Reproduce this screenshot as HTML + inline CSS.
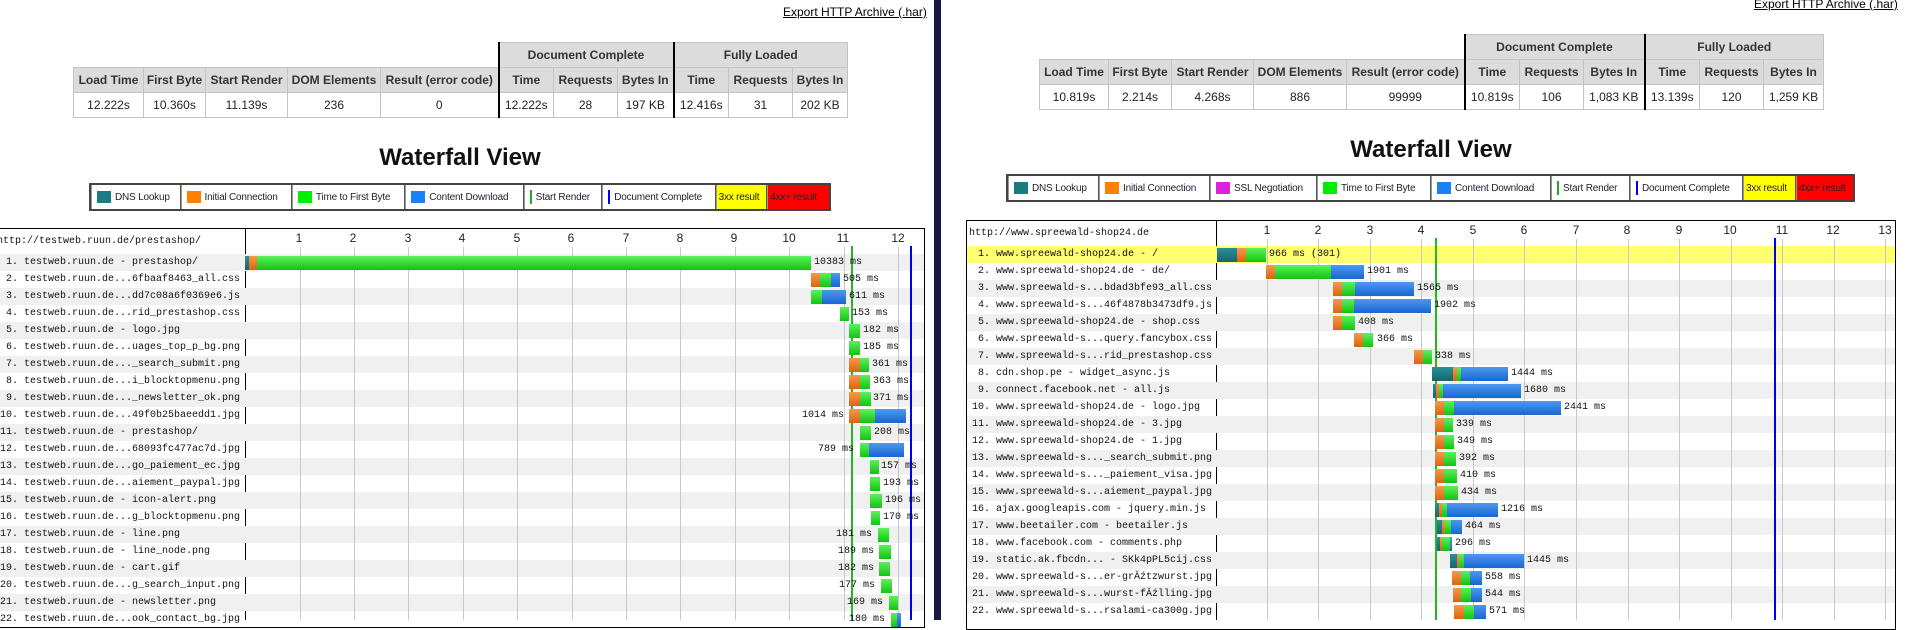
<!DOCTYPE html>
<html><head><meta charset="utf-8"><style>
*{margin:0;padding:0;box-sizing:border-box}
body{width:1920px;height:620px;overflow:hidden;background:#fff;position:relative;font-family:"Liberation Sans",Arial,sans-serif;color:#222}
.a{position:absolute}
.exp{font-size:12px;color:#000;text-decoration:underline;white-space:nowrap}
table.res{position:absolute;border-collapse:collapse;font-size:12px;table-layout:fixed}
table.res td{border:1px solid #c4c4c4;text-align:center;height:25px;padding:0;white-space:nowrap;overflow:hidden}
table.res td.h{background:#dcdcdc;font-weight:bold;color:#333}
table.res td.e{border:none;background:none}
table.res td.k{border-left:2px solid #000}
.title{position:absolute;font-size:24px;font-weight:bold;color:#111;text-align:center;white-space:nowrap}
.leg{position:absolute;border:2px solid #444;height:28px;display:flex;background:#fff}
.leg div{border-right:1px solid #555;border-left:1px solid #999;font-size:10px;letter-spacing:-0.2px;color:#223;display:flex;align-items:center;padding-left:5px;white-space:nowrap;overflow:hidden}
.leg div:last-child{border-right:none}
.sw{display:inline-block;width:14px;height:12px;margin-right:4px;flex:none}
.box{position:absolute;border:1px solid #000}
.bg{position:absolute;height:17px}
.gy{background:#f0f0f0}
.yl{background:#ffff70}
.gl{position:absolute;width:1px;background:#c8c8c8}
.tk{position:absolute;font:12px "Liberation Sans",Arial,sans-serif;width:20px;margin-left:-10px;text-align:center}
.row{position:absolute;height:17px;font:10px/17px "Liberation Mono",monospace;white-space:pre;color:#111}
.s{position:absolute;top:2px;height:14px}
.d{background:linear-gradient(#2a8f97,#16656c)}
.c{background:linear-gradient(#f59a4a,#d9650f)}
.f{background:linear-gradient(#5cf05c,#12c412)}
.b{background:linear-gradient(#4b9af0,#1a64d0)}
.t{position:absolute;top:0}
</style></head><body>

<!-- ===== LEFT PANEL ===== -->
<div class="a exp" style="left:783px;top:5px">Export HTTP Archive (.har)</div>
<table class="res" style="left:73px;top:42px;width:774px">
<colgroup><col style="width:70px"><col style="width:62px"><col style="width:82px"><col style="width:93px"><col style="width:118px"><col style="width:55px"><col style="width:64px"><col style="width:56px"><col style="width:55px"><col style="width:64px"><col style="width:55px"></colgroup>
<tr><td class="e"></td><td class="e"></td><td class="e"></td><td class="e"></td><td class="e"></td><td class="h k" colspan="3">Document Complete</td><td class="h k" colspan="3">Fully Loaded</td></tr>
<tr><td class="h">Load Time</td><td class="h">First Byte</td><td class="h">Start Render</td><td class="h">DOM Elements</td><td class="h">Result (error code)</td><td class="h k">Time</td><td class="h">Requests</td><td class="h">Bytes In</td><td class="h k">Time</td><td class="h">Requests</td><td class="h">Bytes In</td></tr>
<tr><td>12.222s</td><td>10.360s</td><td>11.139s</td><td>236</td><td>0</td><td class="k">12.222s</td><td>28</td><td>197 KB</td><td class="k">12.416s</td><td>31</td><td>202 KB</td></tr>
</table>
<div class="title" style="left:360px;width:200px;top:144px">Waterfall View</div>
<div class="leg" style="left:89px;top:183px;width:742px">
<div style="width:90px"><span class="sw" style="background:#1b7b83"></span>DNS Lookup</div>
<div style="width:112px"><span class="sw" style="background:#ff7f00"></span>Initial Connection</div>
<div style="width:114px"><span class="sw" style="background:#00ee00"></span>Time to First Byte</div>
<div style="width:119px"><span class="sw" style="background:#1a82f5"></span>Content Download</div>
<div style="width:79px"><span style="display:inline-block;width:2px;height:14px;background:#28a828;margin-right:4px"></span>Start Render</div>
<div style="width:114px"><span style="display:inline-block;width:2px;height:14px;background:#0000ee;margin-right:4px"></span>Document Complete</div>
<div style="width:52px;background:#ffff00;padding-left:2px">3xx result</div>
<div style="width:62px;background:#ff0000;padding-left:2px">4xx+ result</div>
</div>

<div class="box" style="left:-2px;top:228px;width:927px;height:400px"></div>
<div class="a" style="left:245px;top:228px;width:1px;height:392px;background:#000"></div>
<div class="row" style="left:-3px;top:233px">http://testweb.ruun.de/prestashop/</div>
<div class="bg gy" style="left:0;width:924px;top:254px"></div>
<div class="bg gy" style="left:0;width:924px;top:288px"></div>
<div class="bg gy" style="left:0;width:924px;top:322px"></div>
<div class="bg gy" style="left:0;width:924px;top:356px"></div>
<div class="bg gy" style="left:0;width:924px;top:390px"></div>
<div class="bg gy" style="left:0;width:924px;top:424px"></div>
<div class="bg gy" style="left:0;width:924px;top:458px"></div>
<div class="bg gy" style="left:0;width:924px;top:492px"></div>
<div class="bg gy" style="left:0;width:924px;top:526px"></div>
<div class="bg gy" style="left:0;width:924px;top:560px"></div>
<div class="bg gy" style="left:0;width:924px;top:594px"></div>

<div class="gl" style="left:300px;top:247px;height:373px"></div>
<div class="gl" style="left:354px;top:247px;height:373px"></div>
<div class="gl" style="left:408px;top:247px;height:373px"></div>
<div class="gl" style="left:463px;top:247px;height:373px"></div>
<div class="gl" style="left:517px;top:247px;height:373px"></div>
<div class="gl" style="left:572px;top:247px;height:373px"></div>
<div class="gl" style="left:626px;top:247px;height:373px"></div>
<div class="gl" style="left:680px;top:247px;height:373px"></div>
<div class="gl" style="left:735px;top:247px;height:373px"></div>
<div class="gl" style="left:789px;top:247px;height:373px"></div>
<div class="gl" style="left:844px;top:247px;height:373px"></div>
<div class="gl" style="left:898px;top:247px;height:373px"></div>
<div class="tk" style="left:299px;top:231px">1</div>
<div class="tk" style="left:353px;top:231px">2</div>
<div class="tk" style="left:408px;top:231px">3</div>
<div class="tk" style="left:462px;top:231px">4</div>
<div class="tk" style="left:517px;top:231px">5</div>
<div class="tk" style="left:571px;top:231px">6</div>
<div class="tk" style="left:626px;top:231px">7</div>
<div class="tk" style="left:680px;top:231px">8</div>
<div class="tk" style="left:734px;top:231px">9</div>
<div class="tk" style="left:789px;top:231px">10</div>
<div class="tk" style="left:843px;top:231px">11</div>
<div class="tk" style="left:898px;top:231px">12</div>
<div class="a" style="left:851px;top:246px;width:2px;height:374px;background:#28b428"></div>
<div class="a" style="left:910px;top:246px;width:2px;height:374px;background:#0000ee"></div>

<div class="row" style="left:0;top:254px;width:924px"> 1. testweb.ruun.de - prestashop/<i class="s d" style="left:245px;width:4px"></i><i class="s c" style="left:249px;width:8px"></i><i class="s f" style="left:257px;width:554px"></i><span class="t" style="left:814px">10383 ms</span></div>
<div class="row" style="left:0;top:271px"> 2. testweb.ruun.de...6fbaaf8463_all.css<i class="s c" style="left:811px;width:9px"></i><i class="s f" style="left:820px;width:11px"></i><i class="s b" style="left:831px;width:9px"></i><span class="t" style="left:843px">505 ms</span></div>
<div class="row" style="left:0;top:288px"> 3. testweb.ruun.de...dd7c08a6f0369e6.js<i class="s f" style="left:811px;width:11px"></i><i class="s b" style="left:822px;width:24px"></i><span class="t" style="left:849px">611 ms</span></div>
<div class="row" style="left:0;top:305px"> 4. testweb.ruun.de...rid_prestashop.css<i class="s f" style="left:840px;width:9px"></i><span class="t" style="left:852px">153 ms</span></div>
<div class="row" style="left:0;top:322px"> 5. testweb.ruun.de - logo.jpg<i class="s f" style="left:849px;width:11px"></i><span class="t" style="left:863px">182 ms</span></div>
<div class="row" style="left:0;top:339px"> 6. testweb.ruun.de...uages_top_p_bg.png<i class="s f" style="left:849px;width:11px"></i><span class="t" style="left:863px">185 ms</span></div>
<div class="row" style="left:0;top:356px"> 7. testweb.ruun.de..._search_submit.png<i class="s c" style="left:849px;width:11px"></i><i class="s f" style="left:860px;width:9px"></i><span class="t" style="left:872px">361 ms</span></div>
<div class="row" style="left:0;top:373px"> 8. testweb.ruun.de...i_blocktopmenu.png<i class="s c" style="left:849px;width:11px"></i><i class="s f" style="left:860px;width:10px"></i><span class="t" style="left:873px">363 ms</span></div>
<div class="row" style="left:0;top:390px"> 9. testweb.ruun.de..._newsletter_ok.png<i class="s c" style="left:849px;width:11px"></i><i class="s f" style="left:860px;width:11px"></i><span class="t" style="left:873px">371 ms</span></div>
<div class="row" style="left:0;top:407px">10. testweb.ruun.de...49f0b25baeedd1.jpg<span class="t" style="left:802px">1014 ms</span><i class="s c" style="left:849px;width:11px"></i><i class="s f" style="left:860px;width:15px"></i><i class="s b" style="left:875px;width:31px"></i></div>
<div class="row" style="left:0;top:424px">11. testweb.ruun.de - prestashop/<i class="s f" style="left:860px;width:11px"></i><span class="t" style="left:874px">208 ms</span></div>
<div class="row" style="left:0;top:441px">12. testweb.ruun.de...68093fc477ac7d.jpg<span class="t" style="left:818px">789 ms</span><i class="s f" style="left:860px;width:9px"></i><i class="s b" style="left:869px;width:35px"></i></div>
<div class="row" style="left:0;top:458px">13. testweb.ruun.de...go_paiement_ec.jpg<i class="s f" style="left:870px;width:9px"></i><span class="t" style="left:881px">157 ms</span></div>
<div class="row" style="left:0;top:475px">14. testweb.ruun.de...aiement_paypal.jpg<i class="s f" style="left:870px;width:10px"></i><span class="t" style="left:883px">193 ms</span></div>
<div class="row" style="left:0;top:492px">15. testweb.ruun.de - icon-alert.png<i class="s f" style="left:870px;width:12px"></i><span class="t" style="left:885px">196 ms</span></div>
<div class="row" style="left:0;top:509px">16. testweb.ruun.de...g_blocktopmenu.png<i class="s f" style="left:871px;width:9px"></i><span class="t" style="left:883px">170 ms</span></div>
<div class="row" style="left:0;top:526px">17. testweb.ruun.de - line.png<span class="t" style="left:836px">181 ms</span><i class="s f" style="left:878px;width:11px"></i></div>
<div class="row" style="left:0;top:543px">18. testweb.ruun.de - line_node.png<span class="t" style="left:838px">189 ms</span><i class="s f" style="left:879px;width:12px"></i></div>
<div class="row" style="left:0;top:560px">19. testweb.ruun.de - cart.gif<span class="t" style="left:838px">182 ms</span><i class="s f" style="left:879px;width:11px"></i></div>
<div class="row" style="left:0;top:577px">20. testweb.ruun.de...g_search_input.png<span class="t" style="left:839px">177 ms</span><i class="s f" style="left:881px;width:11px"></i></div>
<div class="row" style="left:0;top:594px">21. testweb.ruun.de - newsletter.png<span class="t" style="left:847px">169 ms</span><i class="s f" style="left:889px;width:9px"></i></div>
<div class="row" style="left:0;top:611px">22. testweb.ruun.de...ook_contact_bg.jpg<span class="t" style="left:849px">180 ms</span><i class="s f" style="left:891px;width:6px"></i><i class="s b" style="left:897px;width:4px"></i></div>

<!-- divider -->
<div class="a" style="left:934px;top:0;width:7px;height:620px;background:#1a1a40"></div>

<!-- ===== RIGHT PANEL ===== -->
<div class="a exp" style="left:1754px;top:-3px">Export HTTP Archive (.har)</div>
<table class="res" style="left:1039px;top:34px;width:784px">
<colgroup><col style="width:69px"><col style="width:63px"><col style="width:82px"><col style="width:93px"><col style="width:118px"><col style="width:55px"><col style="width:64px"><col style="width:61px"><col style="width:55px"><col style="width:64px"><col style="width:60px"></colgroup>
<tr><td class="e"></td><td class="e"></td><td class="e"></td><td class="e"></td><td class="e"></td><td class="h k" colspan="3">Document Complete</td><td class="h k" colspan="3">Fully Loaded</td></tr>
<tr><td class="h">Load Time</td><td class="h">First Byte</td><td class="h">Start Render</td><td class="h">DOM Elements</td><td class="h">Result (error code)</td><td class="h k">Time</td><td class="h">Requests</td><td class="h">Bytes In</td><td class="h k">Time</td><td class="h">Requests</td><td class="h">Bytes In</td></tr>
<tr><td>10.819s</td><td>2.214s</td><td>4.268s</td><td>886</td><td>99999</td><td class="k">10.819s</td><td>106</td><td>1,083 KB</td><td class="k">13.139s</td><td>120</td><td>1,259 KB</td></tr>
</table>
<div class="title" style="left:1331px;width:200px;top:136px">Waterfall View</div>
<div class="leg" style="left:1006px;top:174px;width:849px">
<div style="width:91px"><span class="sw" style="background:#1b7b83"></span>DNS Lookup</div>
<div style="width:111px"><span class="sw" style="background:#ff7f00"></span>Initial Connection</div>
<div style="width:107px"><span class="sw" style="background:#dd22dd"></span>SSL Negotiation</div>
<div style="width:114px"><span class="sw" style="background:#00ee00"></span>Time to First Byte</div>
<div style="width:120px"><span class="sw" style="background:#1a82f5"></span>Content Download</div>
<div style="width:79px"><span style="display:inline-block;width:2px;height:14px;background:#28a828;margin-right:4px"></span>Start Render</div>
<div style="width:113px"><span style="display:inline-block;width:2px;height:14px;background:#0000ee;margin-right:4px"></span>Document Complete</div>
<div style="width:53px;background:#ffff00;padding-left:2px">3xx result</div>
<div style="width:57px;background:#ff0000;padding-left:2px">4xx+ result</div>
</div>

<div class="box" style="left:966px;top:220px;width:930px;height:410px"></div>
<div class="a" style="left:1216px;top:220px;width:1px;height:400px;background:#000"></div>
<div class="row" style="left:969px;top:225px">http://www.spreewald-shop24.de</div>
<div class="bg yl" style="left:967px;width:928px;top:246px"></div>
<div class="bg gy" style="left:967px;width:928px;top:280px"></div>
<div class="bg gy" style="left:967px;width:928px;top:314px"></div>
<div class="bg gy" style="left:967px;width:928px;top:348px"></div>
<div class="bg gy" style="left:967px;width:928px;top:382px"></div>
<div class="bg gy" style="left:967px;width:928px;top:416px"></div>
<div class="bg gy" style="left:967px;width:928px;top:450px"></div>
<div class="bg gy" style="left:967px;width:928px;top:484px"></div>
<div class="bg gy" style="left:967px;width:928px;top:518px"></div>
<div class="bg gy" style="left:967px;width:928px;top:552px"></div>
<div class="bg gy" style="left:967px;width:928px;top:586px"></div>

<div class="gl" style="left:1267px;top:239px;height:381px"></div>
<div class="gl" style="left:1318px;top:239px;height:381px"></div>
<div class="gl" style="left:1370px;top:239px;height:381px"></div>
<div class="gl" style="left:1421px;top:239px;height:381px"></div>
<div class="gl" style="left:1473px;top:239px;height:381px"></div>
<div class="gl" style="left:1524px;top:239px;height:381px"></div>
<div class="gl" style="left:1576px;top:239px;height:381px"></div>
<div class="gl" style="left:1628px;top:239px;height:381px"></div>
<div class="gl" style="left:1679px;top:239px;height:381px"></div>
<div class="gl" style="left:1731px;top:239px;height:381px"></div>
<div class="gl" style="left:1782px;top:239px;height:381px"></div>
<div class="gl" style="left:1834px;top:239px;height:381px"></div>
<div class="gl" style="left:1885px;top:239px;height:381px"></div>
<div class="tk" style="left:1267px;top:223px">1</div>
<div class="tk" style="left:1318px;top:223px">2</div>
<div class="tk" style="left:1370px;top:223px">3</div>
<div class="tk" style="left:1421px;top:223px">4</div>
<div class="tk" style="left:1473px;top:223px">5</div>
<div class="tk" style="left:1524px;top:223px">6</div>
<div class="tk" style="left:1576px;top:223px">7</div>
<div class="tk" style="left:1627px;top:223px">8</div>
<div class="tk" style="left:1679px;top:223px">9</div>
<div class="tk" style="left:1730px;top:223px">10</div>
<div class="tk" style="left:1782px;top:223px">11</div>
<div class="tk" style="left:1833px;top:223px">12</div>
<div class="tk" style="left:1885px;top:223px">13</div>
<div class="a" style="left:1435px;top:238px;width:2px;height:382px;background:#28b428"></div>
<div class="a" style="left:1774px;top:238px;width:2px;height:382px;background:#0000ee"></div>

<div class="row" style="left:972px;top:246px"> 1. www.spreewald-shop24.de - /</div>
<div class="row" style="left:0;top:246px"><i class="s d" style="left:1217px;width:20px"></i><i class="s c" style="left:1237px;width:9px"></i><i class="s f" style="left:1246px;width:20px"></i><span class="t" style="left:1269px">966 ms (301)</span></div>
<div class="row" style="left:972px;top:263px"> 2. www.spreewald-shop24.de - de/</div>
<div class="row" style="left:0;top:263px"><i class="s c" style="left:1266px;width:9px"></i><i class="s f" style="left:1275px;width:56px"></i><i class="s b" style="left:1331px;width:33px"></i><span class="t" style="left:1367px">1901 ms</span></div>
<div class="row" style="left:972px;top:280px"> 3. www.spreewald-s...bdad3bfe93_all.css</div>
<div class="row" style="left:0;top:280px"><i class="s c" style="left:1333px;width:9px"></i><i class="s f" style="left:1342px;width:13px"></i><i class="s b" style="left:1355px;width:59px"></i><span class="t" style="left:1417px">1565 ms</span></div>
<div class="row" style="left:972px;top:297px"> 4. www.spreewald-s...46f4878b3473df9.js</div>
<div class="row" style="left:0;top:297px"><i class="s c" style="left:1333px;width:9px"></i><i class="s f" style="left:1342px;width:12px"></i><i class="s b" style="left:1354px;width:77px"></i><span class="t" style="left:1434px">1902 ms</span></div>
<div class="row" style="left:972px;top:314px"> 5. www.spreewald-shop24.de - shop.css</div>
<div class="row" style="left:0;top:314px"><i class="s c" style="left:1333px;width:9px"></i><i class="s f" style="left:1342px;width:13px"></i><span class="t" style="left:1358px">408 ms</span></div>
<div class="row" style="left:972px;top:331px"> 6. www.spreewald-s...query.fancybox.css</div>
<div class="row" style="left:0;top:331px"><i class="s c" style="left:1354px;width:9px"></i><i class="s f" style="left:1363px;width:10px"></i><span class="t" style="left:1377px">366 ms</span></div>
<div class="row" style="left:972px;top:348px"> 7. www.spreewald-s...rid_prestashop.css</div>
<div class="row" style="left:0;top:348px"><i class="s c" style="left:1414px;width:9px"></i><i class="s f" style="left:1423px;width:9px"></i><span class="t" style="left:1435px">338 ms</span></div>
<div class="row" style="left:972px;top:365px"> 8. cdn.shop.pe - widget_async.js</div>
<div class="row" style="left:0;top:365px"><i class="s d" style="left:1432px;width:21px"></i><i class="s c" style="left:1453px;width:4px"></i><i class="s f" style="left:1457px;width:4px"></i><i class="s b" style="left:1461px;width:47px"></i><span class="t" style="left:1511px">1444 ms</span></div>
<div class="row" style="left:972px;top:382px"> 9. connect.facebook.net - all.js</div>
<div class="row" style="left:0;top:382px"><i class="s d" style="left:1433px;width:3px"></i><i class="s c" style="left:1436px;width:3px"></i><i class="s f" style="left:1439px;width:4px"></i><i class="s b" style="left:1443px;width:78px"></i><span class="t" style="left:1524px">1680 ms</span></div>
<div class="row" style="left:972px;top:399px">10. www.spreewald-shop24.de - logo.jpg</div>
<div class="row" style="left:0;top:399px"><i class="s c" style="left:1435px;width:9px"></i><i class="s f" style="left:1444px;width:10px"></i><i class="s b" style="left:1454px;width:107px"></i><span class="t" style="left:1564px">2441 ms</span></div>
<div class="row" style="left:972px;top:416px">11. www.spreewald-shop24.de - 3.jpg</div>
<div class="row" style="left:0;top:416px"><i class="s c" style="left:1435px;width:9px"></i><i class="s f" style="left:1444px;width:9px"></i><span class="t" style="left:1456px">339 ms</span></div>
<div class="row" style="left:972px;top:433px">12. www.spreewald-shop24.de - 1.jpg</div>
<div class="row" style="left:0;top:433px"><i class="s c" style="left:1435px;width:9px"></i><i class="s f" style="left:1444px;width:10px"></i><span class="t" style="left:1457px">349 ms</span></div>
<div class="row" style="left:972px;top:450px">13. www.spreewald-s..._search_submit.png</div>
<div class="row" style="left:0;top:450px"><i class="s c" style="left:1435px;width:9px"></i><i class="s f" style="left:1444px;width:12px"></i><span class="t" style="left:1459px">392 ms</span></div>
<div class="row" style="left:972px;top:467px">14. www.spreewald-s..._paiement_visa.jpg</div>
<div class="row" style="left:0;top:467px"><i class="s c" style="left:1435px;width:9px"></i><i class="s f" style="left:1444px;width:13px"></i><span class="t" style="left:1460px">410 ms</span></div>
<div class="row" style="left:972px;top:484px">15. www.spreewald-s...aiement_paypal.jpg</div>
<div class="row" style="left:0;top:484px"><i class="s c" style="left:1435px;width:9px"></i><i class="s f" style="left:1444px;width:14px"></i><span class="t" style="left:1461px">434 ms</span></div>
<div class="row" style="left:972px;top:501px">16. ajax.googleapis.com - jquery.min.js</div>
<div class="row" style="left:0;top:501px"><i class="s d" style="left:1435px;width:4px"></i><i class="s c" style="left:1439px;width:3px"></i><i class="s f" style="left:1442px;width:5px"></i><i class="s b" style="left:1447px;width:51px"></i><span class="t" style="left:1501px">1216 ms</span></div>
<div class="row" style="left:972px;top:518px">17. www.beetailer.com - beetailer.js</div>
<div class="row" style="left:0;top:518px"><i class="s d" style="left:1437px;width:5px"></i><i class="s c" style="left:1442px;width:3px"></i><i class="s f" style="left:1445px;width:6px"></i><i class="s b" style="left:1451px;width:11px"></i><span class="t" style="left:1465px">464 ms</span></div>
<div class="row" style="left:972px;top:535px">18. www.facebook.com - comments.php</div>
<div class="row" style="left:0;top:535px"><i class="s d" style="left:1437px;width:3px"></i><i class="s c" style="left:1440px;width:2px"></i><i class="s f" style="left:1442px;width:8px"></i><i class="s b" style="left:1450px;width:2px"></i><span class="t" style="left:1455px">296 ms</span></div>
<div class="row" style="left:972px;top:552px">19. static.ak.fbcdn... - SKk4pPL5cij.css</div>
<div class="row" style="left:0;top:552px"><i class="s d" style="left:1450px;width:7px"></i><i class="s c" style="left:1457px;width:2px"></i><i class="s f" style="left:1459px;width:5px"></i><i class="s b" style="left:1464px;width:60px"></i><span class="t" style="left:1527px">1445 ms</span></div>
<div class="row" style="left:972px;top:569px">20. www.spreewald-s...er-grĂźtzwurst.jpg</div>
<div class="row" style="left:0;top:569px"><i class="s c" style="left:1452px;width:9px"></i><i class="s f" style="left:1461px;width:9px"></i><i class="s b" style="left:1470px;width:12px"></i><span class="t" style="left:1485px">558 ms</span></div>
<div class="row" style="left:972px;top:586px">21. www.spreewald-s...wurst-fĂźlling.jpg</div>
<div class="row" style="left:0;top:586px"><i class="s c" style="left:1453px;width:8px"></i><i class="s f" style="left:1461px;width:10px"></i><i class="s b" style="left:1471px;width:11px"></i><span class="t" style="left:1485px">544 ms</span></div>
<div class="row" style="left:972px;top:603px">22. www.spreewald-s...rsalami-ca300g.jpg</div>
<div class="row" style="left:0;top:603px"><i class="s c" style="left:1454px;width:10px"></i><i class="s f" style="left:1464px;width:10px"></i><i class="s b" style="left:1474px;width:12px"></i><span class="t" style="left:1489px">571 ms</span></div>

</body></html>
